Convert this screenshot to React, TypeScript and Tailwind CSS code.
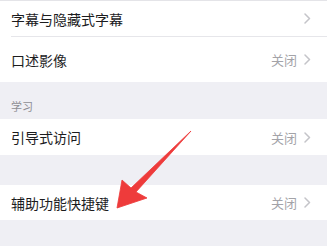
import React from 'react';

const font = { fontFamily: '"Noto Sans CJK SC", "Noto Sans", sans-serif' };

function Chevron() {
  return (
    <svg width="7" height="11" viewBox="0 0 7 11" className="ml-[7px]">
      <path d="M1 1 L5.5 5.5 L1 10" fill="none" stroke="#c4c4c9" strokeWidth="1.5" strokeLinecap="round" strokeLinejoin="round" />
    </svg>
  );
}

function Row({ label, value, h }: { label: string; value?: string; h: string }) {
  return (
    <div className={`flex items-center justify-between bg-white pl-[11px] pr-[16px] ${h}`}>
      <span className="text-[14px] text-[#1c1c1e] leading-none">{label}</span>
      <div className="flex items-center">
        {value && <span className="text-[13px] text-[#a3a3a8] leading-none">{value}</span>}
        <Chevron />
      </div>
    </div>
  );
}

export default function App() {
  return (
    <div className="relative w-[327px] h-[246px] overflow-hidden bg-[#efeff4]" style={font}>
      <div className="h-px bg-[#e4e4e8]" />
      <Row label="字幕与隐藏式字幕" h="h-[35px]" />
      <div className="bg-white pl-[11px]">
        <div className="h-px bg-[#e6e6ea]" />
      </div>
      <Row label="口述影像" value="关闭" h="h-[45px]" />

      <div className="h-[37px] flex items-end pl-[11px] pb-[7px]">
        <span className="text-[11px] text-[#8e8e93] leading-none">学习</span>
      </div>
      <Row label="引导式访问" value="关闭" h="h-[36px]" />

      <div className="h-[30px]" />
      <Row label="辅助功能快捷键" value="关闭" h="h-[35px]" />

      {/* red annotation arrow */}
      <svg className="absolute left-0 top-0 pointer-events-none" width="327" height="246" viewBox="0 0 327 246">
        <polygon
          points="191,131 136,192 147,198 117,208 122,180 131,188"
          fill="#ee3b3b"
          stroke="#ee3b3b"
          strokeWidth="0.8"
          strokeLinejoin="round"
        />
      </svg>
    </div>
  );
}
